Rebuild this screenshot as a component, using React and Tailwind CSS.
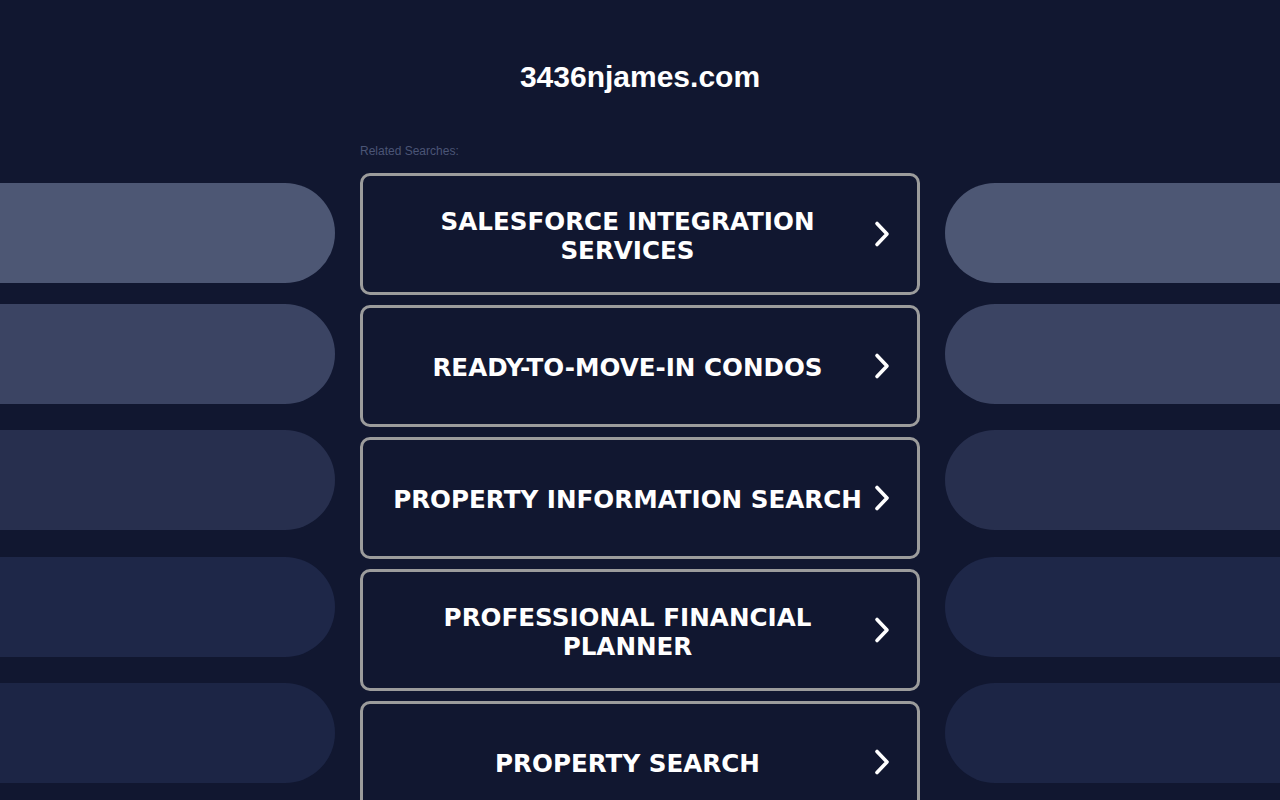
import { ChevronRight } from "lucide-react";

const searches = [
  "SALESFORCE INTEGRATION SERVICES",
  "READY-TO-MOVE-IN CONDOS",
  "PROPERTY INFORMATION SEARCH",
  "PROFESSIONAL FINANCIAL PLANNER",
  "PROPERTY SEARCH",
];

// side pills: colour and top margin
const pills = [
  { bg: "bg-[#4d5774]", mt: "mt-0" },
  { bg: "bg-[#3b4463]", mt: "mt-[21px]" },
  { bg: "bg-[#272f4e]", mt: "mt-[26px]" },
  { bg: "bg-[#1e2748]", mt: "mt-[27px]" },
  { bg: "bg-[#1c2545]", mt: "mt-[26px]" },
];

const Chevron = () => (
  <svg width="20" height="28" viewBox="0 0 20 28" fill="none" className="shrink-0">
    <path d="M5 3.5 L15 14 L5 24.5" stroke="white" strokeWidth="3.6" strokeLinecap="round" strokeLinejoin="round" />
  </svg>
);

const SideColumn = ({ side }) => (
  <div className="flex flex-col pt-[183px]">
    {pills.map((p, i) => (
      <div
        key={i}
        className={`h-[100px] ${p.bg} ${p.mt} ${side === "left" ? "rounded-r-full" : "rounded-l-full"}`}
      />
    ))}
  </div>
);

export default function App() {
  return (
    <div className="min-h-screen h-[800px] overflow-hidden bg-[#111730] font-['Liberation_Sans',Arial,sans-serif]">
      <div className="grid grid-cols-[335px_560px_1fr] gap-x-[25px]">
        <SideColumn side="left" />

        <div className="flex flex-col">
          <h1 className="pt-[59px] text-center text-[30px] leading-[36px] font-bold text-white">
            3436njames.com
          </h1>
          <div className="mt-[49px] text-[12px] leading-[14px] text-[#4b5576]">Related Searches:</div>
          <div className="mt-[15px] flex flex-col gap-[10px]">
            {searches.map((s) => (
              <a
                key={s}
                href="#"
                className="h-[122px] rounded-[10px] border-[3px] border-[#9c9c9c] bg-[#111730] flex items-center pl-5 pr-[25px]"
              >
                <span className="flex-1 pt-[3px] text-center text-white font-bold text-[24.6px] leading-[29px] font-['DejaVu_Sans',Verdana,sans-serif]">
                  {s}
                </span>
                <Chevron />
              </a>
            ))}
          </div>
        </div>

        <SideColumn side="right" />
      </div>
    </div>
  );
}
